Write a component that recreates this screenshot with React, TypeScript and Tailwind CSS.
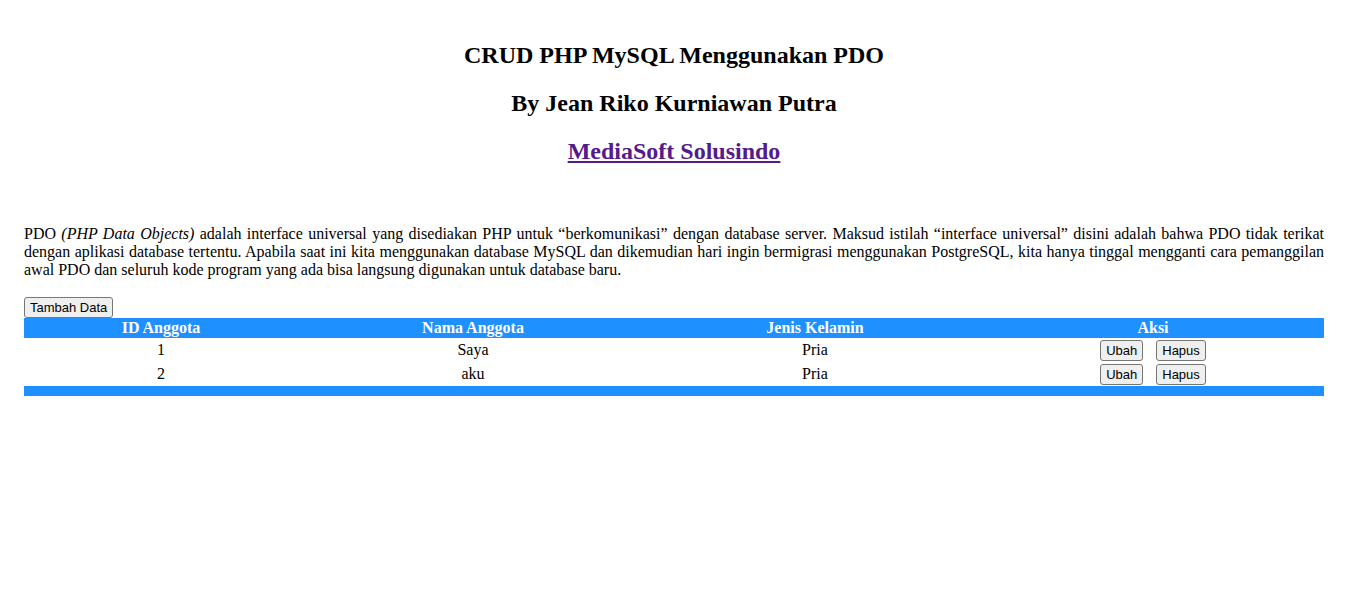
import React from 'react';

const rows = [
  { id: 1, nama: 'Saya', jk: 'Pria' },
  { id: 2, nama: 'aku', jk: 'Pria' },
];

// Plain browser-default looking button
const Btn = ({ children }: { children: React.ReactNode }) => (
  <button className="h-[21px] px-[5px] bg-[#efefef] border border-[#767676] rounded-[3px] text-[13px] leading-[15px] text-black font-['Liberation_Sans',Arial,sans-serif]">
    {children}
  </button>
);

const App: React.FC = () => {
  return (
    <div className="min-h-[601px] bg-white text-black font-['Liberation_Serif','Times_New_Roman',serif] pl-6 pr-[29px] pt-[42px]">
      <h2 className="text-center text-[24px] leading-[27px] font-bold">CRUD PHP MySQL Menggunakan PDO</h2>
      <h2 className="mt-[21px] text-center text-[24px] leading-[27px] font-bold">By Jean Riko Kurniawan Putra</h2>
      <h2 className="mt-[21px] text-center text-[24px] leading-[27px] font-bold">
        <a href="#" className="text-[#551a8b] underline">MediaSoft Solusindo</a>
      </h2>

      <p className="mt-[60px] text-[16px] leading-[18px] text-justify">
        PDO <i>(PHP Data Objects)</i> adalah interface universal yang disediakan PHP untuk “berkomunikasi” dengan database server. Maksud istilah “interface universal” disini adalah bahwa PDO tidak terikat dengan aplikasi database tertentu. Apabila saat ini kita menggunakan database MySQL dan dikemudian hari ingin bermigrasi menggunakan PostgreSQL, kita hanya tinggal mengganti cara pemanggilan awal PDO dan seluruh kode program yang ada bisa langsung digunakan untuk database baru.
      </p>

      <div className="mt-[18px] flex">
        <Btn>Tambah Data</Btn>
      </div>

      <table className="w-[1300px] border-collapse text-[16px] leading-[18px]">
        <thead>
          <tr className="bg-[#1e90ff] text-white h-[20px]">
            <th className="w-[274px] font-bold p-0">ID Anggota</th>
            <th className="w-[350px] font-bold p-0">Nama Anggota</th>
            <th className="w-[334px] font-bold p-0">Jenis Kelamin</th>
            <th className="w-[342px] font-bold p-0">Aksi</th>
          </tr>
        </thead>
        <tbody>
          {rows.map(r => (
            <tr key={r.id} className="h-[24px]">
              <td className="text-center p-0">{r.id}</td>
              <td className="text-center p-0">{r.nama}</td>
              <td className="text-center p-0">{r.jk}</td>
              <td className="p-0">
                <div className="flex justify-center gap-[13px]">
                  <Btn>Ubah</Btn>
                  <Btn>Hapus</Btn>
                </div>
              </td>
            </tr>
          ))}
        </tbody>
        <tfoot>
          <tr className="bg-[#1e90ff] h-[10px]">
            <td colSpan={4} className="p-0"></td>
          </tr>
        </tfoot>
      </table>
    </div>
  );
};

export default App;
